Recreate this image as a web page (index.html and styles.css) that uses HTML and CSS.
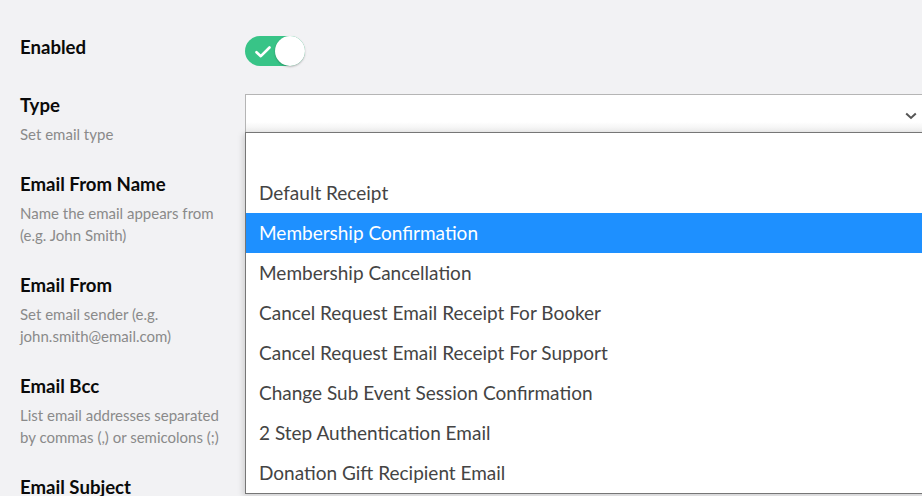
FILE: index.html
```html
<!DOCTYPE html>
<html lang="en">
<head>
<meta charset="utf-8">
<title>Email settings</title>
<link rel="stylesheet" href="styles.css">
</head>
<body>
<div class="form">
  <div class="row">
    <div class="label-col">
      <div class="label">Enabled</div>
    </div>
    <div class="control-col">
      <div class="toggle">
        <svg class="check" width="16" height="12" viewBox="0 0 16 12"><path d="M1.5 6.2 L5.8 10.2 L14.5 1.5" fill="none" stroke="#fff" stroke-width="2.6" stroke-linecap="round" stroke-linejoin="round"/></svg>
        <span class="knob"></span>
      </div>
    </div>
  </div>
  <div class="row">
    <div class="label-col">
      <div class="label">Type</div>
      <div class="desc">Set email type</div>
    </div>
    <div class="control-col">
      <div class="select-wrap">
        <div class="select">
          <svg class="chev" width="12" height="8" viewBox="0 0 12 8"><path d="M1.2 1.5 L6 6 L10.8 1.5" fill="none" stroke="#555" stroke-width="2"/></svg>
        </div>
        <ul class="menu">
          <li class="opt"></li>
          <li class="opt">Default Receipt</li>
          <li class="opt active">Membership Confirmation</li>
          <li class="opt">Membership Cancellation</li>
          <li class="opt">Cancel Request Email Receipt For Booker</li>
          <li class="opt">Cancel Request Email Receipt For Support</li>
          <li class="opt">Change Sub Event Session Confirmation</li>
          <li class="opt">2 Step Authentication Email</li>
          <li class="opt">Donation Gift Recipient Email</li>
        </ul>
      </div>
    </div>
  </div>
  <div class="row">
    <div class="label-col">
      <div class="label">Email From Name</div>
      <div class="desc">Name the email appears from (e.g. John Smith)</div>
    </div>
    <div class="control-col"></div>
  </div>
  <div class="row">
    <div class="label-col">
      <div class="label">Email From</div>
      <div class="desc">Set email sender (e.g. john.smith@email.com)</div>
    </div>
    <div class="control-col"></div>
  </div>
  <div class="row">
    <div class="label-col">
      <div class="label">Email Bcc</div>
      <div class="desc">List email addresses separated by commas (,) or semicolons (;)</div>
    </div>
    <div class="control-col"></div>
  </div>
  <div class="row">
    <div class="label-col">
      <div class="label">Email Subject</div>
    </div>
    <div class="control-col"></div>
  </div>
</div>
</body>
</html>
```
FILE: styles.css
```css
html, body {
  margin: 0;
  padding: 0;
  overflow: hidden;
  background: #f2f2f4;
}
body {
  font-family: Lato, "Open Sans", sans-serif;
  width: 922px;
  height: 496px;
}
.form {
  padding: 36px 0 0 20px;
  display: flex;
  flex-direction: column;
  gap: 28px;
}
.row {
  display: flex;
  align-items: flex-start;
}
.label-col {
  width: 205px;
  padding-right: 20px;
  flex: none;
}
.control-col {
  flex: 1;
}
.label {
  font-size: 18.6px;
  font-weight: 700;
  line-height: 22px;
  color: #0a0a0a;
}
.desc {
  margin-top: 7px;
  font-size: 15px;
  line-height: 22px;
  color: #8a8a8a;
}
.toggle {
  position: relative;
  width: 60px;
  height: 30px;
  border-radius: 15px;
  background: #38c487;
}
.check {
  position: absolute;
  left: 10px;
  top: 10px;
}
.knob {
  position: absolute;
  right: 0;
  top: 0;
  width: 30px;
  height: 30px;
  border-radius: 50%;
  background: #fff;
  box-shadow: 0 1px 2px rgba(0,0,0,0.25);
}
.select-wrap {
  position: relative;
  margin-right: -10px;
}
.select {
  height: 38px;
  border: 1px solid #b5b5b5;
  border-bottom: none;
  background: linear-gradient(#fff 0, #fff 27px, #ececec 38px);
  position: relative;
}
.chev {
  position: absolute;
  right: 14px;
  top: 17px;
}
.menu {
  position: absolute;
  left: 0;
  right: 0;
  top: 38px;
  margin: 0;
  padding: 0;
  list-style: none;
  background: #fff;
  border: 1px solid #767676;
  box-shadow: -2px 2px 6px rgba(0,0,0,0.15);
}
.opt {
  height: 40px;
  line-height: 39px;
  padding-left: 13px;
  font-size: 19px;
  color: #444;
  white-space: nowrap;
}
.opt.active {
  background: #1e90ff;
  color: #fff;
}
```
